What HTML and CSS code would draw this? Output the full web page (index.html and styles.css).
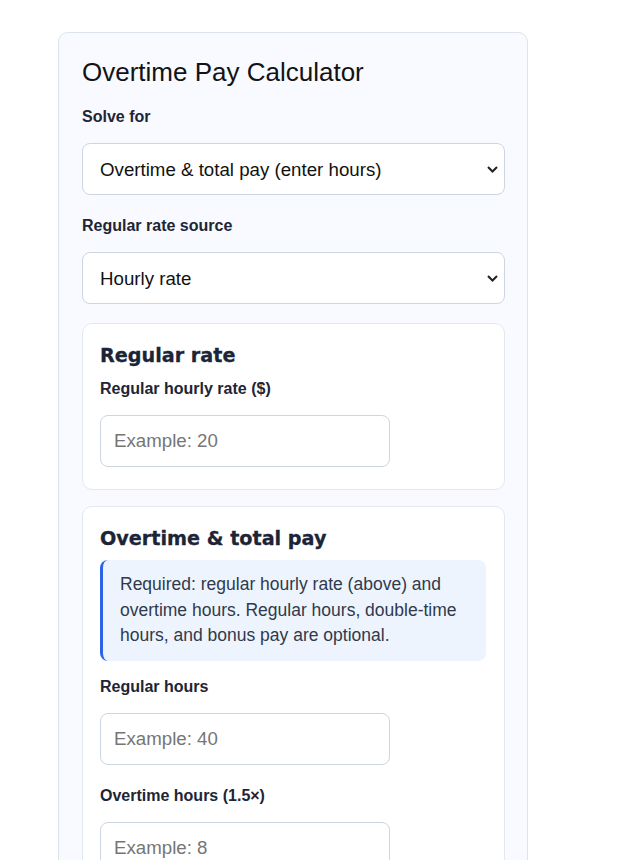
FILE: index.html
```html
<!DOCTYPE html>
<html lang="en">
<head>
    <meta charset="UTF-8">
    <meta name="viewport" content="width=device-width, initial-scale=1.0">
    <title>Overtime Pay Calculator</title>
    <link rel="stylesheet" href="styles.css">
</head>
<body>
    <div class="panel">
        <h1>Overtime Pay Calculator</h1>

        <div class="field">
            <label for="solve_for">Solve for</label>
            <select id="solve_for" name="solve_for">
                <option value="pay">Overtime &amp; total pay (enter hours)</option>
                <option value="hours">Hours needed (enter target pay)</option>
            </select>
        </div>

        <div class="field field-last">
            <label for="rate_source">Regular rate source</label>
            <select id="rate_source" name="rate_source">
                <option value="hourly">Hourly rate</option>
                <option value="salary">Weekly salary</option>
            </select>
        </div>

        <div class="section">
            <h2>Regular rate</h2>
            <div class="field">
                <label for="hourly_rate">Regular hourly rate ($)</label>
                <input type="number" id="hourly_rate" name="hourly_rate" placeholder="Example: 20">
            </div>
        </div>

        <div class="section">
            <h2>Overtime &amp; total pay</h2>
            <div class="note">
                Required: regular hourly rate (above) and overtime hours. Regular hours, double-time hours, and bonus pay are optional.
            </div>

            <div class="field">
                <label for="regular_hours">Regular hours</label>
                <input type="number" id="regular_hours" name="regular_hours" placeholder="Example: 40">
            </div>

            <div class="field">
                <label for="ot_hours">Overtime hours (1.5×)</label>
                <input type="number" id="ot_hours" name="ot_hours" placeholder="Example: 8">
            </div>

            <div class="field">
                <label for="dt_hours">Double-time hours (2×)</label>
                <input type="number" id="dt_hours" name="dt_hours" placeholder="Example: 0">
            </div>

            <div class="field">
                <label for="bonus">Bonus pay ($)</label>
                <input type="number" id="bonus" name="bonus" placeholder="Example: 100">
            </div>
        </div>
    </div>
</body>
</html>
```

FILE: styles.css
```css
* {
    box-sizing: border-box;
}

body {
    margin: 0;
    font-family: "Liberation Sans", Arial, sans-serif;
    background: #ffffff;
    color: #111111;
}

.panel {
    width: 470px;
    margin: 32px 0 0 58px;
    padding: 24px 22px 24px 23px;
    background: #f8faff;
    border: 1px solid #dde3ec;
    border-radius: 10px;
}

.panel h1 {
    margin: 0 0 21px;
    font-size: 26px;
    font-weight: 400;
    line-height: 30px;
    color: #131313;
}

.field {
    margin-bottom: 22px;
}

.field-last {
    margin-bottom: 19px;
}

.field label {
    display: block;
    margin-bottom: 17px;
    font-size: 16px;
    font-weight: 700;
    line-height: 18px;
    color: #1e2535;
}

.field select,
.field input {
    display: block;
    height: 52px;
    font-family: inherit;
    font-size: 18.7px;
    color: #111111;
    background-color: #ffffff;
    border: 1px solid #cdd5e0;
    border-radius: 8px;
}

.field select {
    width: 100%;
    padding: 0 28px 0 17px;
    appearance: none;
    -webkit-appearance: none;
    background-image: url("data:image/svg+xml,%3Csvg xmlns='http://www.w3.org/2000/svg' width='11' height='7' viewBox='0 0 11 7'%3E%3Cpath d='M1 1l4.5 4.5L10 1' fill='none' stroke='%23202020' stroke-width='2'/%3E%3C/svg%3E");
    background-repeat: no-repeat;
    background-position: right 6px center;
}

.field input {
    width: 290px;
    padding: 0 13px;
}

.field input::placeholder {
    color: #767676;
}

.section {
    margin-bottom: 16px;
    padding: 20px 18px 22px 17px;
    background: #ffffff;
    border: 1px solid #e2e8f0;
    border-radius: 10px;
}

.section h2 {
    margin: 0 0 10px;
    font-family: "DejaVu Sans", Verdana, sans-serif;
    font-size: 19.2px;
    font-weight: 700;
    line-height: 23px;
    color: #1c2437;
    -webkit-text-stroke: 0.3px #1c2437;
}

.section h2 + .field {
    padding-top: 3px;
}

.section .field {
    margin-bottom: 22px;
}

.section .field:last-child {
    margin-bottom: 0;
}

.note {
    margin-bottom: 17px;
    padding: 12px 17px;
    font-size: 17.5px;
    line-height: 25.5px;
    color: #2f3a4c;
    background: #eef4fe;
    border-left: 3px solid #2f63e6;
    border-radius: 8px;
}
```
